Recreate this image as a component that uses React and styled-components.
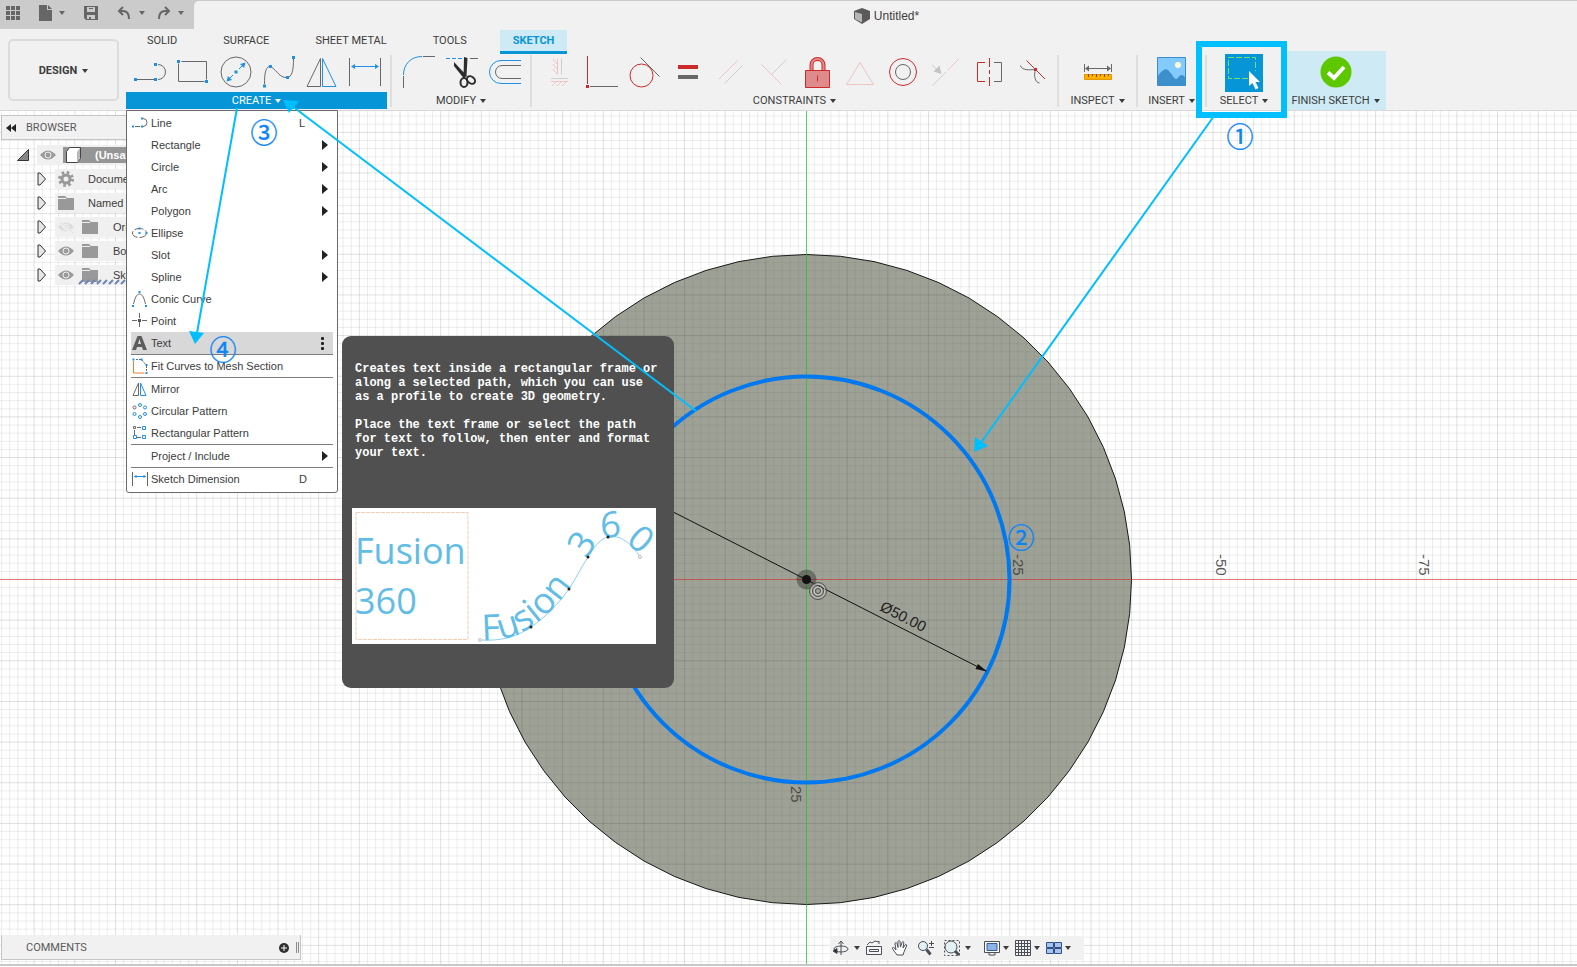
import React from "react";
import styled, { createGlobalStyle, css } from "styled-components";

const BLUE = "#0696d7";
const LINE_BLUE = "#1e90e6";
const CYAN = "#00bfff";
const RED = "#cc2a2a";
const GREY = "#686868";
const PALE_RED = "#eec4c4";
const PALE_GREY = "#cfcfcf";

const Global = createGlobalStyle`
  *, *::before, *::after { box-sizing: border-box; }
  body { margin: 0; background: #fff; }
  button { font: inherit; color: inherit; background: none; border: 0; padding: 0; cursor: pointer; }
  ul { list-style: none; margin: 0; padding: 0; }
`;

const Page = styled.div`
  position: relative;
  display: flex;
  flex-direction: column;
  height: 100vh;
  min-height: 720px;
  overflow: hidden;
  font: 11px/16px "Liberation Sans", Arial, sans-serif;
  color: #3c3c3c;
`;

/* ---------- title bar ---------- */
const TopBar = styled.header`
  display: flex;
  height: 29px;
  flex: none;
  background: #cbcbcb;
`;
const QuickAccess = styled.div`
  display: flex;
  align-items: center;
  gap: 19px;
  width: 194px;
  padding: 0 0 3px 6px;
`;
const History = styled.div`
  display: flex;
  gap: 13px;
`;
const QuickButton = styled.button`
  display: flex;
  align-items: center;
  gap: 6px;
  color: #666;
  svg { display: block; }
`;
const Caret = styled.i`
  display: inline-block;
  flex: none;
  width: 0;
  height: 0;
  border: 3px solid transparent;
  border-top: 4px solid currentColor;
  border-bottom: 0;
`;
const TitleArea = styled.div`
  flex: 1;
  display: flex;
  align-items: center;
  justify-content: center;
  gap: 3px;
  margin-top: 1px;
  padding: 1px 0 0 2px;
  border-top-left-radius: 5px;
  background: #f1f1f1;
  font-size: 12px;
`;

/* ---------- ribbon ---------- */
const Ribbon = styled.div`
  position: relative;
  z-index: 2;
  display: flex;
  flex: none;
  height: 82px;
  background: #f1f1f1;
  border-bottom: 1px solid #d9d9d9;
  font-family: Roboto, "Liberation Sans", sans-serif;
`;
const WorkspaceButton = styled.button`
  width: 111px;
  height: 62px;
  margin: 10px 7px 0 8px;
  padding-top: 1px;
  border: 2px solid #dcdcdc;
  border-radius: 5px;
  font-weight: bold;
  display: flex;
  align-items: center;
  justify-content: center;
  gap: 5px;
`;
const RibbonBody = styled.div`
  flex: 1;
`;
const Tabs = styled.nav`
  display: flex;
  gap: 20px;
  height: 25px;
  padding: 1px 0 0 8px;
`;
const Tab = styled.a`
  padding: 3px 13px 0;
  color: #3c3c3c;
  text-decoration: none;
  border-bottom: 3px solid transparent;
  ${(p) => p.$active && css`
    color: ${BLUE};
    font-weight: bold;
    background: #cdeaf5;
    border-color: ${BLUE};
  `}
`;
const Groups = styled.div`
  display: flex;
  height: 56px;
`;
const Group = styled.section`
  position: relative;
  flex: none;
  display: flex;
  flex-direction: column;
  align-items: center;
  width: ${(p) => p.$width}px;
  ${(p) => p.$finish && css`
    margin: -3px 0 0 4px;
    padding-top: 3px;
    background: #cdeaf5;
  `}
`;
const Divider = styled.span`
  flex: none;
  width: 2px;
  height: 52px;
  margin: 1px 0 0 ${(p) => p.$left || 0}px;
  background: #dedede;
`;
const IconRow = styled.div`
  display: flex;
  height: 38px;
  padding-left: ${(p) => (p.$many ? 2 : 0)}px;
`;
const ToolButton = styled.button`
  display: grid;
  place-items: center;
  width: 43px;
  height: 36px;
  svg { display: block; overflow: visible; }
`;
const GroupLabel = styled.button`
  display: flex;
  align-items: center;
  justify-content: center;
  gap: 4px;
  width: 100%;
  height: 17px;
  padding-top: 1px;
  white-space: nowrap;
  ${(p) => p.$active && css`
    color: #fff;
    background: ${BLUE};
  `}
`;

/* ---------- create menu ---------- */
const Menu = styled.div`
  position: absolute;
  top: 100%;
  left: 0;
  width: 212px;
  padding: 1px 4px 2px;
  background: #fff;
  border: 1px solid #6a6a6a;
  border-radius: 0 0 3px 3px;
  font: 11px/22px "Liberation Sans", Arial, sans-serif;
`;
const MenuItem = styled.button`
  display: grid;
  grid-template-columns: 20px 1fr 23px 11px;
  align-items: center;
  width: 100%;
  height: 22px;
  text-align: left;
  white-space: nowrap;
  background: ${(p) => (p.$hover ? "#d8d8d8" : "none")};
  svg { display: block; overflow: visible; margin-left: 1px; }
`;
const MenuLine = styled.li`
  height: 1px;
  background: #7c7c7c;
`;
const Flyout = styled.i`
  border: 5px solid transparent;
  border-left: 6px solid #222;
  border-right: 0;
  width: 0;
`;
const More = styled.span`
  display: grid;
  gap: 2px;
  margin-left: -1px;
  i { width: 3px; height: 3px; border-radius: 1px; background: #222; }
`;

/* ---------- tooltip ---------- */
const Tooltip = styled.aside`
  position: absolute;
  top: 225px;
  left: 215px;
  width: 332px;
  padding: 26px 0 44px;
  border-radius: 9px;
  background: #505050;
  color: #fff;
  font: bold 12px/14px "Liberation Mono", monospace;
  white-space: nowrap;
  p { margin: 0 13px 14px; }
`;
const Preview = styled.svg`
  display: block;
  margin: 48px 0 0 10px;
  background: #fff;
  overflow: visible;
  font: 400 36px "Open Sans", "Noto Sans", sans-serif;
`;

/* ---------- workspace ---------- */
const Workspace = styled.main`
  position: relative;
  flex: 1;
  min-height: 0;
  display: flex;
  flex-direction: column;
  justify-content: space-between;
  margin-bottom: 1px;
  border-bottom: 2px solid #c8c8c8;
`;
const Canvas = styled.svg`
  position: absolute;
  inset: 0;
  width: 100%;
  height: 100%;
`;
const Browser = styled.section`
  position: relative;
  width: 250px;
  margin: 4px 0 0 1px;
`;
const panelTitle = css`
  background: #f1f1f1;
  border: 1px solid #c4c4c4;
  font: 11px/16px Roboto, "Liberation Sans", sans-serif;
  color: #5a5a5a;
`;
const BrowserTitle = styled.h2`
  display: flex;
  align-items: center;
  gap: 10px;
  height: 25px;
  margin: 0 0 5px;
  padding: 1px 4px 0;
  ${panelTitle}
`;
const TreeRow = styled.li`
  display: flex;
  align-items: center;
  height: 20px;
  margin-bottom: 4px;
  padding-left: ${(p) => (p.$root ? 16 : 36)}px;
`;
const Twisty = styled.button`
  width: ${(p) => (p.$root ? 20 : 18)}px;
  svg { display: block; }
`;
const TreeBody = styled.div`
  display: flex;
  align-items: center;
  flex: 1;
  height: 20px;
  gap: 8px;
  padding-left: 3px;
  background: #f0f0f0;
  svg { display: block; flex: none; overflow: visible; }
`;
const RootName = styled.strong`
  flex: 1;
  display: flex;
  align-items: center;
  gap: 13px;
  height: 16px;
  padding-left: 2px;
  margin-left: -1px;
  background: #969696;
  color: #fff;
`;
const NodeName = styled.span`
  margin-left: ${(p) => (p.$deep ? 7 : 6)}px;
`;

const BottomRow = styled.footer`
  position: relative;
  display: flex;
  align-items: flex-end;
  justify-content: space-between;
  padding: 0 0 4px 1px;
`;
const Comments = styled.div`
  display: flex;
  align-items: center;
  width: 300px;
  height: 25px;
  padding: 1px 1px 0 24px;
  ${panelTitle}
  border-top: 0;
  span { flex: 1; }
  svg { display: block; }
`;
const Grip = styled.i`
  width: 3px;
  height: 11px;
  margin-left: 7px;
  border: solid #8a8a8a;
  border-width: 0 1px;
`;
const NavArea = styled.div`
  flex: 1;
  display: flex;
  justify-content: center;
  padding-left: 36px;
`;
const NavBar = styled.div`
  display: flex;
  align-items: center;
  gap: 10px;
  height: 24px;
  padding: 0 13px 0 3px;
  background: #f1f1f1;
`;
const NavButton = styled.button`
  display: flex;
  align-items: center;
  gap: ${(p) => (p.$tight ? 3 : 5)}px;
  svg { display: block; overflow: visible; }
`;
const NavCluster = styled.div`
  display: flex;
  gap: 6px;
  margin-left: ${(p) => (p.$spaced ? 3 : 0)}px;
`;

/* ---------- annotations ---------- */
const Arrows = styled.svg`
  position: absolute;
  top: 0;
  left: 0;
  z-index: 4;
  pointer-events: none;
  overflow: visible;
`;
const Focus = styled.span`
  position: absolute;
  inset: -13px -6px -8px -11px;
  border: 6px solid ${CYAN};
  pointer-events: none;
  z-index: 1;
`;

/* ---------- small drawings ---------- */
const Dot = ({ x, y, c = LINE_BLUE, s = 3 }) => (
  <rect x={x - s / 2} y={y - s / 2} width={s} height={s} fill={c} stroke="none" />
);
const Icon = ({ size = 32, children }) => (
  <svg width={size} height={size} viewBox="0 0 32 32" fill="none" stroke={GREY} strokeWidth="1">
    {children}
  </svg>
);

const createIcons = {
  Line: (
    <Icon>
      <path d="M3 23.5H20M24 23.5a7.5 7.5 0 0 0 0-15" />
      <Dot x={1.5} y={23.5} /><Dot x={21.5} y={23.5} /><Dot x={21.5} y={8.5} />
    </Icon>
  ),
  Rectangle: (
    <Icon>
      <path d="M4.5 5.5h25v18M27.5 25.5h-26v-18" />
      <Dot x={1.5} y={5.5} /><Dot x={29.5} y={25.5} />
    </Icon>
  ),
  Circle: (
    <Icon>
      <circle cx="16" cy="16" r="15" />
      <path d="M13 19l-4 4M19 13l4-4" stroke={LINE_BLUE} />
      <path d="M6.500 25.500l1.500-5.500 4 4zM25.500 6.500l-1.500 5.500-4-4z" fill={LINE_BLUE} stroke="none" />
      <Dot x={16} y={16} />
    </Icon>
  ),
  Spline: (
    <Icon>
      <path d="M1.500 28C1.500 18 2.500 12 6 10.500M9 11.500C14 15 17 21.500 23 21.500M26 21c3.500-2 4.500-9 4.500-18" />
      <Dot x={1.5} y={30} /><Dot x={7.5} y={10.5} /><Dot x={24.5} y={21.500} /><Dot x={30.5} y={1.5} />
    </Icon>
  ),
  Mirror: (
    <Icon>
      <path d="M14.500 2.500V30.500H1z" />
      <path d="M16.500 2.500V30.500H30z" stroke={LINE_BLUE} />
    </Icon>
  ),
  Dimension: (
    <Icon>
      <path d="M.5 2v28M31.500 2v28" />
      <path d="M3 10.500h26" stroke={LINE_BLUE} />
      <path d="M2 10.500l4-2.500v5zM30 10.500l-4-2.500v5z" fill={LINE_BLUE} stroke="none" />
    </Icon>
  ),
};
const modifyIcons = {
  Fillet: (
    <Icon>
      <path d="M.5 20v12M20 .5h12" />
      <path d="M.5 19C.5 8 8 .5 19 .5" stroke={LINE_BLUE} />
    </Icon>
  ),
  Trim: (
    <Icon>
      <path d="M0 2.500h17" stroke={LINE_BLUE} strokeDasharray="4 2" />
      <path d="M24 2.500h8" />
      <path d="M8 6l13 14-3.500 2L8 10zM18 1l3.500 1L20.500 20l-3 2.500z" fill="#2d2d2d" stroke="none" />
      <ellipse cx="18" cy="26.500" rx="3.500" ry="4.500" stroke="#2d2d2d" strokeWidth="2" />
      <ellipse cx="25" cy="24" rx="4.500" ry="3.300" transform="rotate(40 25 24)" stroke="#2d2d2d" strokeWidth="2" />
    </Icon>
  ),
  Offset: (
    <Icon>
      <path d="M32 4.500H12a11.500 11.500 0 0 0 0 23H32" stroke={LINE_BLUE} />
      <path d="M32 9.500H13a6.500 6.500 0 0 0 0 13H32" />
    </Icon>
  ),
};
const constraintIcons = {
  "Horizontal/Vertical": (
    <Icon>
      <path d="M18.500 2.500v16M8 22.500h17" stroke={PALE_GREY} />
      <path d="M14.500 2.500v16M10 3l4 5M10 8l4 5M10 13l4 5M8 25.500h17M13 26l-4 4M18 26l-4 4M23 26l-4 4" stroke={PALE_RED} />
    </Icon>
  ),
  Coincident: (
    <Icon>
      <path d="M1.500 0v28" stroke={RED} /><path d="M4 30.500h28" /><Dot x={1.5} y={30.5} c={RED} />
    </Icon>
  ),
  Tangent: (
    <Icon>
      <circle cx="12.500" cy="19.500" r="11.500" stroke={RED} /><path d="M11.500 1.500l19 19" />
    </Icon>
  ),
  Equal: (
    <Icon>
      <path d="M6 9h20v4H6z" fill={RED} stroke="none" /><path d="M6 19h20v4H6z" fill={GREY} stroke="none" />
    </Icon>
  ),
  Parallel: (
    <Icon>
      <path d="M4 23L22.500 4.500" stroke={PALE_RED} /><path d="M9.500 27.500L27.500 9.500" stroke={PALE_GREY} />
    </Icon>
  ),
  Perpendicular: (
    <Icon>
      <path d="M3.500 8.500l20 20" stroke={PALE_RED} /><path d="M28.500 3.500L14 18" stroke={PALE_GREY} />
    </Icon>
  ),
  Fix: (
    <Icon>
      <path d="M10.500 15V9a6 6 0 0 1 12 0v6" stroke={RED} strokeWidth="4" />
      <path d="M10.500 15V9a6 6 0 0 1 12 0v6" stroke="#e08c8c" strokeWidth="2" />
      <path d="M4.500 14.500h24v17h-24z" fill="#df8b8b" stroke={RED} />
      <path d="M16.500 19.500v6" stroke={RED} />
    </Icon>
  ),
  Midpoint: (
    <Icon><path d="M16 6.500L29.500 28.500h-27z" stroke={PALE_RED} /></Icon>
  ),
  Concentric: (
    <Icon><circle cx="16" cy="16" r="13.500" stroke={RED} /><circle cx="16" cy="16" r="7.500" /></Icon>
  ),
  Collinear: (
    <Icon>
      <path d="M2.500 29.500L16 16M2 9l6 5.500" stroke={PALE_GREY} /><path d="M17.500 14.500L29 3" stroke={PALE_RED} />
      <path d="M11.500 18l-8-2.500 6-6z" fill="#c4c4c4" stroke="none" />
    </Icon>
  ),
  Symmetry: (
    <Icon>
      <path d="M12 6.500H4.500v19H12M16.500 2v9M16.500 14v4M16.500 21v9" stroke={RED} /><path d="M21 6.500h7.500v19H21" />
    </Icon>
  ),
  Curvature: (
    <Icon>
      <path d="M4.500 9.500c1 5 9 4.500 15 4-2 6-.5 13 4 13.500" /><path d="M10.500 4.500L29 23" stroke={RED} />
      <Dot x={19.5} y={13.500} c={RED} />
    </Icon>
  ),
};
const InspectIcon = () => (
  <Icon>
    <path d="M2.500 8v8M29.500 8v8M4 12.500h24" />
    <path d="M3 12.500l4-3v6zM29 12.500l-4-3v6z" fill={GREY} stroke="none" />
    <path d="M2.500 18.500h27v5h-27z" fill="#ffb000" stroke="#e59600" />
    <path d="M6.500 18v3M10.500 18v2M14.500 18v3M18.500 18v2M22.500 18v3M26.500 18v2" stroke="#7a5200" />
  </Icon>
);
const InsertIcon = () => (
  <Icon>
    <path d="M1.500 1.500h28v28h-28z" fill="#82caff" stroke="#3b8ccc" />
    <circle cx="22" cy="9" r="3" fill="#fffcd0" stroke="none" />
    <path d="M2 20C6 15 9 11 13 15c3 3 5 8 7 8s3-4 5.500-4 3 2 4 3v7.500H2z" fill="#3d90cb" stroke="none" />
  </Icon>
);
const SelectIcon = () => (
  <svg width="38" height="38" viewBox="0 0 38 38" fill="none">
    <path d="M0 0h38v38H0z" fill={BLUE} />
    <path d="M23 24.500H3.500v-21h27V17" stroke="#6fe06f" strokeDasharray="6 2" />
    <path d="M24 17v15l3.500-3 3 6.500 3-1.500-3-6H35z" fill="#fff" />
  </svg>
);
const FinishIcon = () => (
  <Icon>
    <circle cx="16" cy="16" r="15.500" fill="#5dc800" stroke="none" />
    <path d="M8 16.500l6 5.500L24 11" stroke="#fff" strokeWidth="4" />
  </Icon>
);

/* menu icons, drawn in a 16px box */
const Mini = ({ children }) => (
  <svg width="16" height="16" viewBox="0 0 16 16" fill="none" stroke={GREY}>{children}</svg>
);
const miniIcons = {
  line: (
    <Mini><path d="M3 11.500h5M11 11.500a4 4 0 0 0 0-8" /><Dot x={1} y={11.500} s={2} /><Dot x={10} y={11.500} s={2} /><Dot x={10} y={3.500} s={2} /></Mini>
  ),
  ellipse: (
    <Mini><ellipse cx="7.500" cy="8" rx="7" ry="4.500" strokeDasharray="9 2" /><Dot x={7.5} y={3.500} s={2} /><Dot x={7.5} y={8} s={2} /><Dot x={14.5} y={8} s={2} /></Mini>
  ),
  conic: (
    <Mini><path d="M1.500 13C3 7 4.500 3 7.500 3s4.500 4 6 10" /><Dot x={1} y={15} s={2} /><Dot x={7.500} y={1} s={2} /><Dot x={14} y={15} s={2} /></Mini>
  ),
  point: (
    <Mini><path d="M7.500 0v5M7.500 9v5M0 7.500h5M10 7.500h5" /><Dot x={7.5} y={7.500} c="#555" /></Mini>
  ),
  text: (
    <Mini><path d="M0 15L5.500 1h4L15 15h-4l-1-3H5l-1 3zM6 9h3L7.500 4z" fill="#5c5c5c" fillRule="evenodd" stroke="none" /></Mini>
  ),
  fit: (
    <Mini><path d="M1.500 3v12h11" stroke="#ed7d31" /><path d="M4 1.500h6M10 2l4 5M14.500 8v6" strokeDasharray="2 1" /><Dot x={1.500} y={1.500} s={2} /><Dot x={9.500} y={1.500} s={2} /><Dot x={14.500} y={7} s={2} /><Dot x={14.500} y={15} s={2} /></Mini>
  ),
  mirror: (
    <Mini><path d="M6.500 2v12.500H1z" /><path d="M8.500 2v12.500H14z" stroke={LINE_BLUE} /></Mini>
  ),
  circular: (
    <Mini>
      <circle cx="2.500" cy="4.500" r="1.500" />
      <g stroke={LINE_BLUE}><circle cx="8" cy="2" r="1.500" /><circle cx="13" cy="4.500" r="1.500" /><circle cx="2.500" cy="11" r="1.500" /><circle cx="8" cy="14" r="1.500" /><circle cx="13" cy="11" r="1.500" /></g>
    </Mini>
  ),
  rectangular: (
    <Mini>
      <path d="M1.500 1.500h2v2h-2zM5 2.500h4M2.500 5v5M5 12.500h4" />
      <path d="M10.500 1.500h3v3h-3zM10.500 10.500h3v3h-3zM1.500 10.500h3v3h-3z" stroke={LINE_BLUE} />
    </Mini>
  ),
  dimension: (
    <Mini><path d="M.5 1v14M15.500 1v14" /><path d="M2 5.500h12M4 4v3M12 4v3" stroke={LINE_BLUE} /></Mini>
  ),
};

const menu = [
  { label: "Line", icon: "line", key: "L" },
  { label: "Rectangle", sub: true },
  { label: "Circle", sub: true },
  { label: "Arc", sub: true },
  { label: "Polygon", sub: true },
  { label: "Ellipse", icon: "ellipse" },
  { label: "Slot", sub: true },
  { label: "Spline", sub: true },
  { label: "Conic Curve", icon: "conic" },
  { label: "Point", icon: "point" },
  { label: "Text", icon: "text", hover: true },
  null,
  { label: "Fit Curves to Mesh Section", icon: "fit" },
  null,
  { label: "Mirror", icon: "mirror" },
  { label: "Circular Pattern", icon: "circular" },
  { label: "Rectangular Pattern", icon: "rectangular" },
  null,
  { label: "Project / Include", sub: true },
  null,
  { label: "Sketch Dimension", icon: "dimension", key: "D" },
];

const Eye = ({ off }) => (
  <svg width="16" height="16" viewBox="0 0 16 16">
    <path d="M0 8q8-9 16 0q-8 9-16 0z" fill={off ? "#dcdcdc" : "#9b9b9b"} />
    <circle cx="8" cy="8" r="3" fill={off ? "#dcdcdc" : "#9b9b9b"} stroke="#f0f0f0" />
    {off && <path d="M1 3l14 11" stroke="#f0f0f0" strokeWidth="3" />}
    {off && <path d="M2 3l13 11" stroke="#dcdcdc" />}
  </svg>
);
const Folder = ({ sketch }) => (
  <svg width="16" height="16" viewBox="0 0 16 16" fill="#999">
    <path d="M0 1h7l2 2h7v12H0z" />
    <path d="M0 3.500h8" stroke="#f0f0f0" />
    {sketch && <path d="M-3 17l4-4M3 17l4-4M9 17l4-4M15 17l4-4M21 17l4-4M27 17l4-4M33 17l4-4M39 17l4-4" stroke="#6d84b4" strokeWidth="2" />}
  </svg>
);
const Gear = () => (
  <svg width="16" height="16" viewBox="0 0 16 16" fill="none" stroke="#999">
    <circle cx="8" cy="8" r="4" strokeWidth="3" />
    <circle cx="8" cy="8" r="6.500" strokeWidth="3" strokeDasharray="2.500 2.600" />
  </svg>
);
const Arrow = () => (
  <svg width="10" height="14" viewBox="0 0 10 14">
    <path d="M1 1v12h2l5.500-6L3 1z" fill="#e6e6e6" stroke="#333" />
  </svg>
);

/* ---------- model canvas ---------- */
const ORIGIN = { x: 806.5, y: 579.5 };
const UNIT = 8.13;
const grid = (major) => {
  let d = "";
  for (let k = -130; k <= 130; k++) {
    if ((k % 5 === 0) !== major) continue;
    d += `M${(ORIGIN.x + k * UNIT).toFixed(2)} -400V1500M-400 ${(ORIGIN.y + k * UNIT).toFixed(2)}H2000`;
  }
  return d;
};
const disc = Array.from({ length: 60 }, (_, i) => {
  const a = (i * Math.PI) / 30;
  return `${(ORIGIN.x + 325 * Math.sin(a)).toFixed(1)},${(ORIGIN.y - 325 * Math.cos(a)).toFixed(1)}`;
}).join(" ");

const Model = () => (
  <Canvas viewBox="0 111 1577 853" preserveAspectRatio="xMidYMid slice" fontFamily="Liberation Sans, sans-serif" fontSize="15">
    <path d={grid(false)} stroke="#000" strokeOpacity=".07" />
    <path d={grid(true)} stroke="#000" strokeOpacity=".12" />
    <polygon points={disc} fill="#9b9e93" fillOpacity=".6" />
    <polygon points={disc} fill="#9b9e93" fillOpacity=".94" stroke="#1b1b1b" strokeWidth="1" />
    <clipPath id="body"><polygon points={disc} /></clipPath>
    <g clipPath="url(#body)">
      <path d={grid(false)} stroke="#000" strokeOpacity=".04" />
      <path d={grid(true)} stroke="#000" strokeOpacity=".1" />
    </g>
    <path d={`M-400 ${ORIGIN.y}H2000`} stroke="#e03030" strokeOpacity=".6" />
    <path d={`M${ORIGIN.x} -400V1500`} stroke="#18d028" strokeOpacity=".7" />
    <g fill="#3a3a3a" fillOpacity=".85">
      <text transform="translate(1013 554) rotate(90)">-25</text>
      <text transform="translate(1216 554) rotate(90)">-50</text>
      <text transform="translate(1419 554) rotate(90)">-75</text>
      <text transform="translate(791 786) rotate(90)">25</text>
    </g>
    <text transform="translate(879 610) rotate(27)" fill="#222">Ø50.00</text>
    <circle cx={ORIGIN.x} cy={ORIGIN.y} r="203" fill="none" stroke="#0078f0" strokeWidth="4" />
    <circle cx="806.500" cy="579.500" r="10" fill="#000" fillOpacity=".3" />
    <circle cx="806.500" cy="579.500" r="4.500" fill="#111" />
    <path d="M626 488L986 671" stroke="#111" />
    <path d="M987 671.500l-11.500-2.500 2.500-5z" fill="#111" />
    <g fill="none" stroke="#c8c8c4">
      <circle cx="818" cy="591" r="7" /><circle cx="818" cy="591" r="4" />
    </g>
    <g fill="none" stroke="#555">
      <circle cx="818" cy="591" r="8.500" /><circle cx="818" cy="591" r="5.500" /><circle cx="818" cy="591" r="2.500" />
    </g>
  </Canvas>
);

const HelpTip = () => (
  <Tooltip role="tooltip">
    <p>
      Creates text inside a rectangular frame or<br />
      along a selected path, which you can use<br />
      as a profile to create 3D geometry.
    </p>
    <p>
      Place the text frame or select the path<br />
      for text to follow, then enter and format<br />
      your text.
    </p>
    <Preview width="304" height="136" viewBox="0 0 304 136" fill="#61bde6">
      <rect x="4" y="4.500" width="112" height="127" fill="none" stroke="#f3cdb4" strokeDasharray="4 1" />
      <text x="3" y="56">Fusion</text>
      <text x="3" y="106">360</text>
      <path id="curve" d="M128 132C148 133 163 130 179 119C194 109 207 95 217 81C224 70 229 60 236 49C241 41 247 31 256 29C268 26 280 36 288 49" fill="none" stroke="#8fd0ee" />
      <text><textPath href="#curve" startOffset="2">Fusion</textPath></text>
      <text><textPath href="#curve" startOffset="142">3</textPath></text>
      <text transform="translate(249 30) rotate(-4)">6</text>
      <text transform="translate(273 34) rotate(40)">0</text>
      <g fill="#222"><circle cx="179" cy="119" r="1.500" /><circle cx="217" cy="81" r="1.500" /><circle cx="236" cy="49" r="1.500" /><circle cx="256" cy="29" r="1.500" /></g>
      <g fill="#fff" stroke="#bbb"><circle cx="128" cy="132" r="1.500" /><circle cx="288" cy="49" r="1.500" /></g>
    </Preview>
  </Tooltip>
);

const Tools = ({ icons }) => (
  <IconRow $many={Object.keys(icons).length > 1}>
    {Object.entries(icons).map(([name, icon]) => (
      <ToolButton key={name} aria-label={name}>{icon}</ToolButton>
    ))}
  </IconRow>
);
const Label = ({ children, active }) => (
  <GroupLabel $active={active}>{children}<Caret /></GroupLabel>
);

const NavIcon = ({ children }) => (
  <svg width="16" height="16" viewBox="0 0 16 16" fill="none" stroke="#4a4f57">{children}</svg>
);

const nodes = [
  { name: "Document Settings", icons: [<Gear key="g" />] },
  { name: "Named Views", icons: [<Folder key="f" />] },
  { name: "Origin", deep: true, icons: [<Eye key="e" off />, <Folder key="f" />] },
  { name: "Bodies", deep: true, icons: [<Eye key="e" />, <Folder key="f" />] },
  { name: "Sketches", deep: true, icons: [<Eye key="e" />, <Folder key="f" sketch />] },
];

export default function App() {
  return (
    <Page>
      <Global />
      <TopBar>
        <QuickAccess>
          <QuickButton aria-label="Data panel">
            <svg width="14" height="14" fill="currentColor"><path d="M0 0h4v4H0zM5 0h4v4H5zM10 0h4v4h-4zM0 5h4v4H0zM5 5h4v4H5zM10 5h4v4h-4zM0 10h4v4H0zM5 10h4v4H5zM10 10h4v4h-4z" /></svg>
          </QuickButton>
          <QuickButton aria-label="File">
            <svg width="14" height="16" fill="currentColor"><path d="M0 0h8v5h5v11H0zM9 0l4 4H9z" /></svg>
            <Caret />
          </QuickButton>
          <QuickButton aria-label="Save">
            <svg width="14" height="14" fill="currentColor"><path d="M0 0h14v14H2l-2-2zM3 1v5h8V1zM3 9v4h2v-2h2v2h4V9z" fillRule="evenodd" /><path d="M5 2h4v1H5z" /></svg>
          </QuickButton>
          <History>
            <QuickButton aria-label="Undo">
              <svg width="16" height="14" fill="none" stroke="currentColor" strokeWidth="2"><path d="M6 1L2 5l4 4M2 5h4c4 0 6 3 6 8" /></svg>
              <Caret />
            </QuickButton>
            <QuickButton aria-label="Redo">
              <svg width="14" height="14" fill="none" stroke="currentColor" strokeWidth="2"><path d="M7 1l4 4-4 4M11 5H7c-4 0-6 3-6 8" /></svg>
              <Caret />
            </QuickButton>
          </History>
        </QuickAccess>
        <TitleArea>
          <svg width="17" height="16">
            <path d="M0 3l8-3 8 3v8l-8 5-8-5z" fill="#5a5a5a" /><path d="M1 4l7 2v8.500L1 11z" fill="#b5b5b5" />
          </svg>
          <span>Untitled*</span>
        </TitleArea>
      </TopBar>

      <Ribbon>
        <WorkspaceButton>DESIGN<Caret /></WorkspaceButton>
        <RibbonBody>
          <Tabs>
            {["SOLID", "SURFACE", "SHEET METAL", "TOOLS", "SKETCH"].map((t) => (
              <Tab key={t} href="#" $active={t === "SKETCH"}>{t}</Tab>
            ))}
          </Tabs>
          <Groups>
            <Group $width={261}>
              <Tools icons={createIcons} />
              <Label active>CREATE</Label>
              <Menu>
                <ul>
                  {menu.map((m, i) =>
                    m ? (
                      <li key={m.label}>
                        <MenuItem $hover={m.hover}>
                          <span>{m.icon && miniIcons[m.icon]}</span>
                          <span>{m.label}</span>
                          <span>{m.key}</span>
                          {m.sub && <Flyout />}
                          {m.hover && <More><i /><i /><i /></More>}
                        </MenuItem>
                      </li>
                    ) : (
                      <MenuLine key={i} />
                    )
                  )}
                </ul>
                <HelpTip />
              </Menu>
            </Group>
            <Divider $left={3} />
            <Group $width={138}>
              <Tools icons={modifyIcons} />
              <Label>MODIFY</Label>
            </Group>
            <Divider />
            <Group $width={525}>
              <Tools icons={constraintIcons} />
              <Label>CONSTRAINTS</Label>
            </Group>
            <Divider />
            <Group $width={77}>
              <Tools icons={{ Measure: <InspectIcon /> }} />
              <Label>INSPECT</Label>
            </Group>
            <Divider />
            <Group $width={67}>
              <Tools icons={{ Image: <InsertIcon /> }} />
              <Label>INSERT</Label>
            </Group>
            <Divider />
            <Group $width={74}>
              <Tools icons={{ Select: <SelectIcon /> }} />
              <Label>SELECT</Label>
              <Focus />
            </Group>
            <Group $width={101} $finish>
              <Tools icons={{ Finish: <FinishIcon /> }} />
              <Label>FINISH SKETCH</Label>
            </Group>
          </Groups>
        </RibbonBody>
      </Ribbon>

      <Workspace>
        <Model />
        <Browser>
          <BrowserTitle>
            <svg width="10" height="8" fill="#222"><path d="M5 0v8L0 4zM10 0v8L5 4z" /></svg>
            BROWSER
          </BrowserTitle>
          <ul>
            <TreeRow $root>
              <Twisty $root aria-label="Collapse">
                <svg width="12" height="12"><path d="M11.500 .5v11H.5z" fill="#888" stroke="#333" /></svg>
              </Twisty>
              <TreeBody>
                <Eye />
                <RootName>
                  <svg width="17" height="16" viewBox="0 0 17 16">
                    <path d="M1.500 4.500l3-4h11v11l-3 4h-11z" fill="#fff" stroke="#444" /><path d="M12 5l3-4v10l-3 4z" fill="#b8b8b8" />
                  </svg>
                  (Unsaved)
                </RootName>
              </TreeBody>
            </TreeRow>
            {nodes.map((n) => (
              <TreeRow key={n.name}>
                <Twisty aria-label={`Expand ${n.name}`}><Arrow /></Twisty>
                <TreeBody>
                  {n.icons}
                  <NodeName $deep={n.deep}>{n.name}</NodeName>
                </TreeBody>
              </TreeRow>
            ))}
          </ul>
        </Browser>

        <BottomRow>
          <Comments>
            <span>COMMENTS</span>
            <svg width="10" height="10"><circle cx="5" cy="5" r="5" fill="#2e2e2e" /><path d="M5 2v6M2 5h6" stroke="#fff" /></svg>
            <Grip />
          </Comments>
          <NavArea>
            <NavBar>
              <NavCluster>
                <NavButton aria-label="Orbit">
                  <NavIcon><ellipse cx="8" cy="9" rx="7" ry="3" /><path d="M8 15V2M5.500 4L8 1l2.500 3" /><path d="M0 11l4-2.500v5z" fill="#222" /></NavIcon>
                  <Caret />
                </NavButton>
                <NavButton aria-label="Look at">
                  <NavIcon><path d="M.5 6.500h15v8H.5zM3.500 9.500h9v2h-9zM1 5l3-3 2 1 3-2 3 1 1-1v3" fill="#f6f6f6" /></NavIcon>
                </NavButton>
              </NavCluster>
              <NavButton aria-label="Pan">
                <NavIcon><path d="M5 15C3 12 1 10 .5 8.500S2 7 4 10L3 4c-.3-1.500 1.500-2 2-.5l1 4V2c0-2 2-2 2 0l.5 5L10 2.500c.5-1.500 2-1 1.800.5L11 8l2-3c1-1 2-.5 1.500 1L12 12l-1 3z" fill="#fff" /></NavIcon>
              </NavButton>
              <NavButton aria-label="Zoom">
                <NavIcon><circle cx="5" cy="6" r="4.500" fill="#e3f1f4" /><path d="M8.500 9.500l4 5" strokeWidth="3" /><path d="M11 3.500h5M13.500 1v5M11 7.500h5" /></NavIcon>
              </NavButton>
              <NavButton aria-label="Fit">
                <NavIcon><path d="M.5.500h15v15H.5z" strokeDasharray="2 2" /><circle cx="7" cy="7" r="6" fill="#e3f1f4" /><path d="M11 11l4 4" strokeWidth="3" /></NavIcon>
                <Caret />
              </NavButton>
              <NavCluster $spaced>
                <NavButton $tight aria-label="Display settings">
                  <NavIcon><path d="M.5 1.500h15v11H.5z" fill="#fff" /><path d="M3 3.500h10v7H3z" fill="#8cb4e8" stroke="#2e5c9e" /><path d="M5 13v2h6v-2" /></NavIcon>
                  <Caret />
                </NavButton>
                <NavButton $tight aria-label="Grid settings">
                  <NavIcon><path d="M.5.500h15v15H.5zM.5 3.500h15M.5 6.500h15M.5 9.500h15M.5 12.500h15M3.500.500v15M6.500.500v15M9.500.500v15M12.500.500v15" /></NavIcon>
                  <Caret />
                </NavButton>
                <NavButton $tight aria-label="Viewports">
                  <NavIcon><path d="M.5 2.500h7v5h-7zM8.500 2.500h7v5h-7zM.5 8.500h7v5h-7zM8.500 8.500h7v5h-7z" fill="#a9c4ec" stroke="#2f4f86" /></NavIcon>
                  <Caret />
                </NavButton>
              </NavCluster>
            </NavBar>
          </NavArea>
        </BottomRow>
      </Workspace>

      <Arrows width="1300" height="500" viewBox="0 0 1300 500">
        <g stroke={CYAN} strokeWidth="2">
          <path d="M1214 116L980 444M696 411L292 106M237 108L197 333" />
        </g>
        <g fill={CYAN}>
          <path d="M974 452l1-15 13 9zM283 100l16 1-10 12zM195 344l-6-13 15 2z" />
        </g>
        <g fill="#0a84f5" stroke="#0a84f5" strokeWidth=".4" fontFamily="DejaVu Serif, Noto Sans CJK SC, serif" fontSize="27" textAnchor="middle">
          <text x="1240" y="147">①</text>
          <text x="1021" y="548">②</text>
          <text x="264" y="143">③</text>
          <text x="223" y="360">④</text>
        </g>
      </Arrows>
    </Page>
  );
}
